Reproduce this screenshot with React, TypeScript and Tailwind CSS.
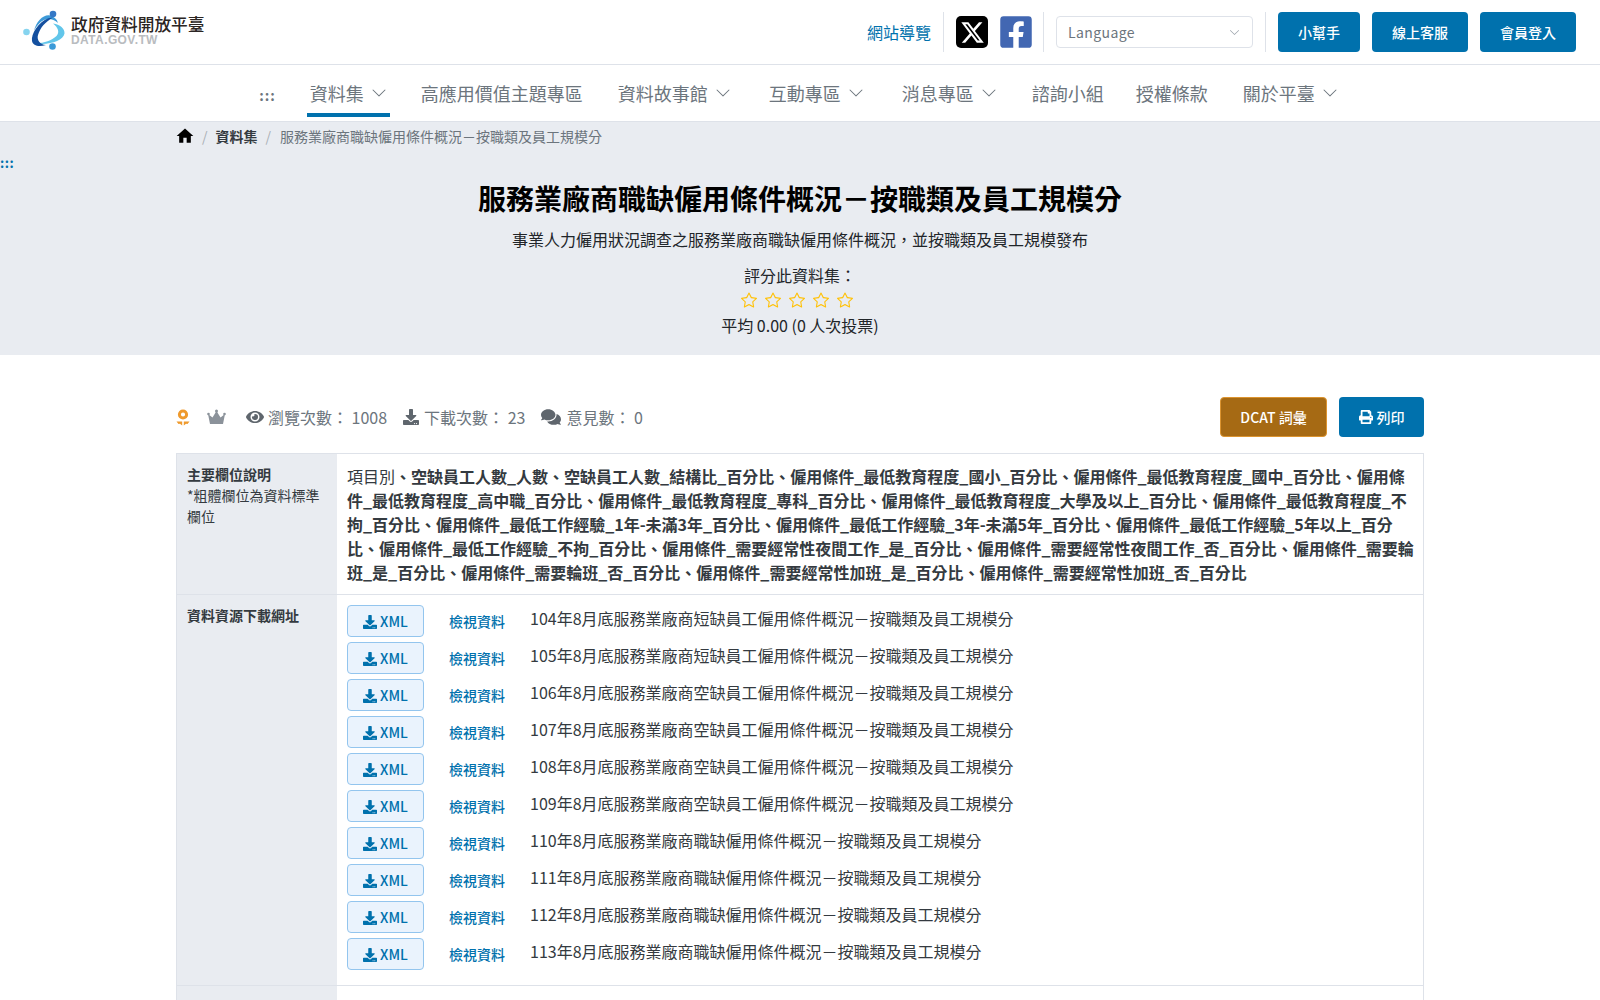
import { FaEye, FaDownload, FaComments, FaPrint, FaFacebookSquare } from "react-icons/fa";
import { FaXTwitter } from "react-icons/fa6";
import { BsChevronDown, BsStar } from "react-icons/bs";
import { MdHome } from "react-icons/md";

const navItems = [
  { label: "高應用價值主題專區", cls: "px-[16px]" },
  { label: "資料故事館", caret: true, cls: "px-[19px]" },
  { label: "互動專區", caret: true, cls: "px-[19px]" },
  { label: "消息專區", caret: true, cls: "px-[19px]" },
  { label: "諮詢小組", cls: "px-[16px]" },
  { label: "授權條款", cls: "px-[16px]" },
  { label: "關於平臺", caret: true, cls: "px-[19px]" },
];

const resources = [
  "104年8月底服務業廠商短缺員工僱用條件概況－按職類及員工規模分",
  "105年8月底服務業廠商短缺員工僱用條件概況－按職類及員工規模分",
  "106年8月底服務業廠商空缺員工僱用條件概況－按職類及員工規模分",
  "107年8月底服務業廠商空缺員工僱用條件概況－按職類及員工規模分",
  "108年8月底服務業廠商空缺員工僱用條件概況－按職類及員工規模分",
  "109年8月底服務業廠商空缺員工僱用條件概況－按職類及員工規模分",
  "110年8月底服務業廠商職缺僱用條件概況－按職類及員工規模分",
  "111年8月底服務業廠商職缺僱用條件概況－按職類及員工規模分",
  "112年8月底服務業廠商職缺僱用條件概況－按職類及員工規模分",
  "113年8月底服務業廠商職缺僱用條件概況－按職類及員工規模分",
];

function Logo() {
  return (
    <svg width="50" height="48" viewBox="0 0 50 48" className="shrink-0">
      <path d="M13 35C28 38 43 33 44.500 25.500C45 20.500 40 16.500 33 15.500C38 19.500 40 24 36.500 28C31 33 22 36 13 35z" fill="#62c6ea" />
      <path d="M14 23C16 13 24 6 30 7.500C34 8.500 37 11 38 15C34 11 28 10 24 12C20 14 16 18 14 23z" fill="#3d9ad8" />
      <path d="M29 10C18 14 11 26 12 33C13 38 19 39 26 37C20 36.500 16.500 32 18 27C20 20 25 14 33 9.500z" fill="#15509f" />
      <circle cx="33" cy="6" r="3.300" fill="#3578c6" />
      <circle cx="6.500" cy="24" r="3.300" fill="#86d4ef" />
      <circle cx="32.500" cy="38.500" r="3.300" fill="#3a9ad8" />
    </svg>
  );
}

function AwardIcon() {
  return (
    <svg width="14" height="17" viewBox="0 0 14 17" className="shrink-0">
      <circle cx="7" cy="5.500" r="3.600" fill="none" stroke="#ef9a2d" strokeWidth="3" />
      <path d="M0.500 12.500H6.200V16.500L4 14.800L2.500 15zM13.500 12.500H7.800V16.500L10 14.800L11.500 15z" fill="#ef9a2d" />
    </svg>
  );
}

function CrownIcon() {
  return (
    <svg width="19" height="16" viewBox="0 0 19 16" className="ml-[17px] shrink-0">
      <path d="M1 5L5.500 8.500L9.500 2L13.500 8.500L18 5L16 15H3z" fill="#8b929a" />
      <circle cx="9.500" cy="2" r="1.500" fill="#8b929a" />
      <circle cx="1.500" cy="5" r="1.300" fill="#8b929a" />
      <circle cx="17.500" cy="5" r="1.300" fill="#8b929a" />
    </svg>
  );
}

function Header() {
  return (
    <header className="flex h-[65px] items-center border-b border-[#dee2e9] pl-5 pr-6">
      <div className="flex items-center">
        <Logo />
        <div className="ml-[1px] -mt-[4px] flex flex-col">
          <span className="text-[16.700px] leading-[20px] font-medium text-[#2b2523]">政府資料開放平臺</span>
          <span className="font-['Liberation_Sans',sans-serif] text-[12px] leading-[13px] font-bold tracking-[0.4px] text-[#b9bcbf]">DATA.GOV.TW</span>
        </div>
      </div>
      <div className="ml-auto flex items-center">
        <a className="pr-3 text-[16px] text-[#0071ad]">網站導覽</a>
        <div className="h-10 w-px bg-[#dee2e9]" />
        <span className="ml-3 flex h-8 w-[32px] items-center justify-center rounded-[5px] bg-black text-white">
          <FaXTwitter size={25} />
        </span>
        <FaFacebookSquare size={36} className="ml-[10px] text-[#4267b2]" />
        <div className="ml-[9px] h-10 w-px bg-[#dee2e9]" />
        <div className="ml-3 flex h-8 w-[197px] items-center justify-between rounded border border-[#dee2e9] pl-[11px] pr-3 text-[14px] text-[#6c757d]">
          <span className="tracking-[0.4px]">Language</span>
          <BsChevronDown size={11} className="text-[#9aa1a9]" />
        </div>
        <div className="ml-3 h-10 w-px bg-[#dee2e9]" />
        <div className="ml-3 flex gap-3">
          <button className="h-10 rounded bg-[#0071ad] px-5 text-[14px] font-medium text-white">小幫手</button>
          <button className="h-10 rounded bg-[#0071ad] px-5 text-[14px] font-medium text-white">線上客服</button>
          <button className="h-10 rounded bg-[#0071ad] px-5 text-[14px] font-medium text-white">會員登入</button>
        </div>
      </div>
    </header>
  );
}

function Nav() {
  return (
    <nav className="flex h-[57px] items-stretch justify-center border-b border-[#dee2e9] pl-4 text-[18px] text-[#6c757d]">
      <span className="mr-[31px] flex items-center pt-[4px] text-[14px] font-bold tracking-[1px]">:::</span>
      <a className="mr-[15px] mb-1 flex items-center gap-[7px] border-b-4 border-[#0071ad] px-[3px] pt-[8px]">
        資料集
        <BsChevronDown size={16} />
      </a>
      {navItems.map((item) => (
        <a key={item.label} className={`mb-1 flex items-center gap-[7px] border-b-4 border-transparent pt-[8px] ${item.cls}`}>
          {item.label}
          {item.caret && <BsChevronDown size={16} />}
        </a>
      ))}
    </nav>
  );
}

function Hero() {
  return (
    <section className="flex h-[233px] flex-col bg-[#e9ecf1]">
      <div className="mx-auto flex h-[28px] w-[1248px] items-center gap-2 text-[14px]">
        <MdHome size={20} className="-mx-[1px] text-black" />
        <span className="text-[#aab0b6]">/</span>
        <span className="font-bold text-[#343a40]">資料集</span>
        <span className="text-[#aab0b6]">/</span>
        <span className="ml-[1px] text-[#6c757d]">服務業廠商職缺僱用條件概況－按職類及員工規模分</span>
      </div>
      <span className="mt-[7px] h-3 text-[13px] leading-[12px] font-bold tracking-[0.5px] text-[#0071ad]">:::</span>
      <h1 className="mt-[10px] text-center text-[28px] leading-[38px] font-bold text-black">服務業廠商職缺僱用條件概況－按職類及員工規模分</h1>
      <p className="mt-[10px] text-center text-[16px] leading-[24px] text-[#212529]">事業人力僱用狀況調查之服務業廠商職缺僱用條件概況，並按職類及員工規模發布</p>
      <p className="mt-[12px] text-center text-[16px] leading-[24px] text-[#212529]">評分此資料集：</p>
      <div className="mt-[1px] flex h-[24px] items-center justify-center gap-[8px] pr-[6px]">
        {[0, 1, 2, 3, 4].map((i) => (
          <BsStar key={i} size={16} className="text-[#ffc107]" />
        ))}
      </div>
      <p className="text-center text-[16px] leading-[26px] text-[#212529]">平均 0.00 (0 人次投票)</p>
    </section>
  );
}

function Stats() {
  return (
    <div className="flex h-[40px] items-center text-[16px] text-[#6c757d]">
      <AwardIcon />
      <CrownIcon />
      <FaEye size={18} className="ml-5 text-[#5f666d]" />
      <span className="ml-1">瀏覽次數： 1008</span>
      <FaDownload size={16} className="ml-4 text-[#5f666d]" />
      <span className="ml-[5px]">下載次數： 23</span>
      <FaComments size={20} className="ml-4 text-[#5f666d]" />
      <span className="ml-[5px]">意見數： 0</span>
      <div className="ml-auto flex gap-3">
        <button className="h-10 w-[107px] rounded border border-[#dc9430] bg-[#a66a14] text-[14px] font-medium text-white">DCAT 詞彙</button>
        <button className="flex h-10 w-[85px] items-center justify-center gap-1 rounded bg-[#0071ad] text-[14px] font-medium text-white">
          <FaPrint size={14} />
          列印
        </button>
      </div>
    </div>
  );
}

function FieldsText() {
  return (
    <div className="py-[10px] pl-[10px] pr-[8px] text-[16px] leading-[24px] font-bold text-[#343a40]">
      <span className="font-normal">項目別</span>、空缺員工人數_人數、空缺員工人數_結構比_百分比、僱用條件_最低教育程度_國小_百分比、僱用條件_最低教育程度_國中_百分比、僱用條件_最低教育程度_高中職_百分比、僱用條件_最低教育程度_專科_百分比、僱用條件_最低教育程度_大學及以上_百分比、僱用條件_最低教育程度_不拘_百分比、僱用條件_最低工作經驗_1年-未滿3年_百分比、僱用條件_最低工作經驗_3年-未滿5年_百分比、僱用條件_最低工作經驗_5年以上_百分比、僱用條件_最低工作經驗_不拘_百分比、僱用條件_需要經常性夜間工作_是_百分比、僱用條件_需要經常性夜間工作_否_百分比、僱用條件_需要輪班_是_百分比、僱用條件_需要輪班_否_百分比、僱用條件_需要經常性加班_是_百分比、僱用條件_需要經常性加班_否_百分比
    </div>
  );
}

function ResourceRow({ title }: { title: string }) {
  return (
    <div className="flex h-[37px] items-start">
      <a className="flex h-8 w-[77px] items-center justify-center gap-[3px] rounded border border-[#93c5ee] bg-[#eaf3fd] pt-[1px] text-[14px] font-medium text-[#0071ad]">
        <FaDownload size={14} />
        XML
      </a>
      <a className="ml-[25px] pt-[4px] text-[14px] leading-[24px] font-medium text-[#0071ad]">檢視資料</a>
      <span className="ml-[25px] pt-[1px] text-[16px] leading-[24px] text-[#343a40]">{title}</span>
    </div>
  );
}

export default function App() {
  return (
    <div className="h-[1000px] overflow-hidden bg-white font-['Noto_Sans_CJK_TC','Noto_Sans',sans-serif]">
      <Header />
      <Nav />
      <Hero />
      <main className="mx-auto w-[1248px] pt-[42px]">
        <Stats />
        <div className="mt-[16px] border border-[#dee2e9]">
          <div className="flex border-b border-[#dee2e9]">
            <div className="w-[160px] shrink-0 bg-[#e9ecf1] px-[10px] py-[10px] text-[14px] leading-[21px] text-[#343a40]">
              <div className="font-bold">主要欄位說明</div>
              <div>*粗體欄位為資料標準欄位</div>
            </div>
            <FieldsText />
          </div>
          <div className="flex border-b border-[#dee2e9]">
            <div className="w-[160px] shrink-0 bg-[#e9ecf1] px-[10px] py-[10px] text-[14px] leading-[21px] font-bold text-[#343a40]">資料資源下載網址</div>
            <div className="flex-1 px-[10px] pt-[10px] pb-[10px]">
              {resources.map((r) => (
                <ResourceRow key={r} title={r} />
              ))}
            </div>
          </div>
          <div className="flex h-[60px]">
            <div className="w-[160px] shrink-0 bg-[#e9ecf1]" />
          </div>
        </div>
      </main>
    </div>
  );
}
